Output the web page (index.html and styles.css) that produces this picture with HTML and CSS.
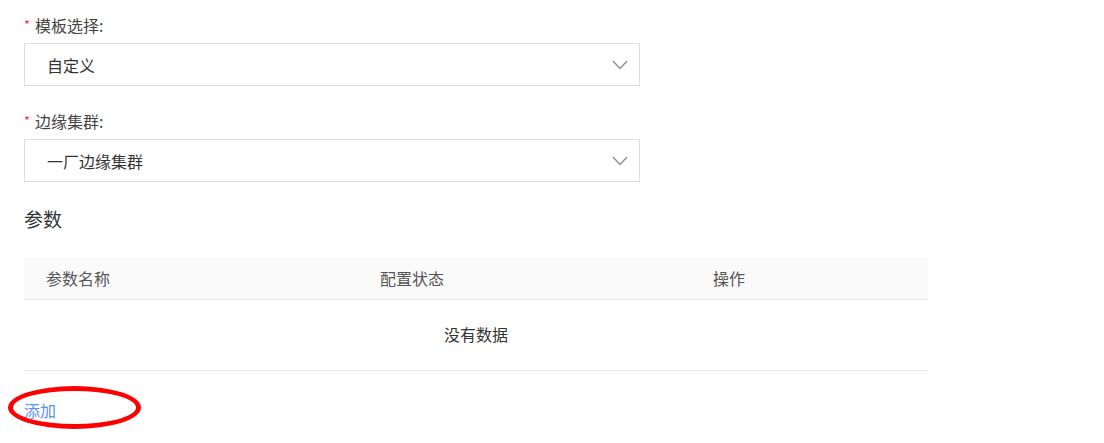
FILE: index.html
```html
<!DOCTYPE html>
<html lang="zh">
<head>
<meta charset="utf-8">
<link rel="stylesheet" href="styles.css">
</head>
<body>
<div class="page">
  <div class="form-item">
    <div class="label"><span class="req">*</span>模板选择:</div>
    <div class="select">
      <span class="value">自定义</span>
      <svg class="arrow" width="16" height="10" viewBox="0 0 16 10"><path d="M1 1 L8 8.5 L15 1" fill="none" stroke="#8c8c8c" stroke-width="1.3"/></svg>
    </div>
  </div>
  <div class="form-item">
    <div class="label"><span class="req">*</span>边缘集群:</div>
    <div class="select">
      <span class="value">一厂边缘集群</span>
      <svg class="arrow" width="16" height="10" viewBox="0 0 16 10"><path d="M1 1 L8 8.5 L15 1" fill="none" stroke="#8c8c8c" stroke-width="1.3"/></svg>
    </div>
  </div>
  <div class="section-title">参数</div>
  <div class="table">
    <div class="thead">
      <div class="th c1">参数名称</div>
      <div class="th c2">配置状态</div>
      <div class="th c3">操作</div>
    </div>
    <div class="empty">没有数据</div>
  </div>
  <div class="add-wrap">
    <a class="add">添加</a>
    <div class="circle"></div>
  </div>
</div>
</body>
</html>
```

FILE: styles.css
```css
html, body {
  margin: 0;
  padding: 0;
  background: #fff;
}
html {
  min-height: 100%;
}
body {
  min-height: 443px;
  font-family: "Noto Sans CJK SC", "Liberation Sans", sans-serif;
  color: #333;
}
.page {
  padding: 14px 0 20px 24px;
}
.form-item {
  margin-bottom: 24px;
}
.label {
  font-size: 16px;
  line-height: 22px;
  height: 22px;
  margin-bottom: 7px;
  color: #444;
}
.req {
  color: #e8463a;
  font-size: 13px;
  margin-right: 5px;
  vertical-align: top;
}
.select {
  box-sizing: border-box;
  width: 616px;
  height: 43px;
  border: 1px solid #dcdcdc;
  display: flex;
  align-items: center;
  justify-content: space-between;
  padding: 0 11px 0 22px;
}
.value {
  font-size: 16px;
  color: #333;
}
.arrow {
  display: block;
}
.section-title {
  font-size: 19px;
  line-height: 26px;
  margin-top: 2px;
  margin-bottom: 25px;
  color: #333;
}
.table {
  width: 904px;
}
.thead {
  display: grid;
  grid-template-columns: 334px 333px 237px;
  background: #fafafa;
  border-bottom: 1px solid #e8e8e8;
  height: 42px;
  align-items: center;
}
.th {
  padding-left: 22px;
  font-size: 16px;
  color: #555;
}
.empty {
  height: 71px;
  border-bottom: 1px solid #e8e8e8;
  display: flex;
  align-items: center;
  justify-content: center;
  font-size: 16px;
  color: #333;
  padding-bottom: 2px;
  box-sizing: border-box;
}
.add-wrap {
  position: relative;
  padding-top: 27px;
}
.add {
  display: inline-block;
  color: #5b8ff9;
  font-size: 16px;
  line-height: 22px;
  cursor: pointer;
}
.circle {
  position: absolute;
  left: -16px;
  top: 15px;
  width: 123px;
  height: 33px;
  border: 5px solid #ff0000;
  border-radius: 50%;
}
```
